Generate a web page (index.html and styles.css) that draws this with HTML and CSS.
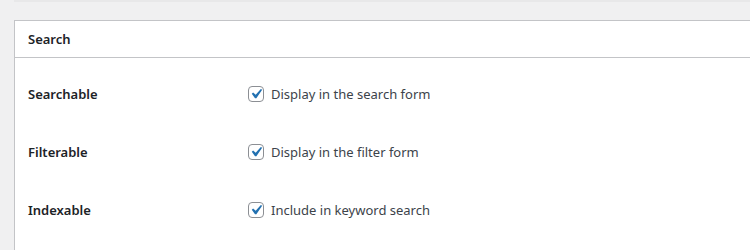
FILE: index.html
```html
<!DOCTYPE html>
<html>
<head>
    <title>Search settings</title>
    <link rel="stylesheet" href="styles.css">
</head>
<body>
    <div class="top-strip"></div>

    <div class="postbox">
        <div class="postbox-header">
            <h2>Search</h2>
        </div>
        <div class="inside">
            <div class="field-row">
                <div class="field-label">Searchable</div>
                <label class="check">
                    <input type="checkbox" checked>
                    <span class="box"><svg viewBox="0 0 20 20"><path d="M14.83 4.89l1.34.94-5.81 8.38H9.02L5.78 9.67l1.34-1.25 2.57 2.4z"/></svg></span>
                    Display in the search form
                </label>
            </div>
            <div class="field-row">
                <div class="field-label">Filterable</div>
                <label class="check">
                    <input type="checkbox" checked>
                    <span class="box"><svg viewBox="0 0 20 20"><path d="M14.83 4.89l1.34.94-5.81 8.38H9.02L5.78 9.67l1.34-1.25 2.57 2.4z"/></svg></span>
                    Display in the filter form
                </label>
            </div>
            <div class="field-row">
                <div class="field-label">Indexable</div>
                <label class="check">
                    <input type="checkbox" checked>
                    <span class="box"><svg viewBox="0 0 20 20"><path d="M14.83 4.89l1.34.94-5.81 8.38H9.02L5.78 9.67l1.34-1.25 2.57 2.4z"/></svg></span>
                    Include in keyword search
                </label>
            </div>
        </div>
    </div>
</body>
</html>
```

FILE: styles.css
```css
body {
    margin: 0;
    background: #f0f0f1;
    font-family: "Noto Sans", "Open Sans", sans-serif;
    font-size: 13px;
    color: #1d2327;
    overflow: hidden;
}

.top-strip {
    margin-left: 14px;
    height: 2px;
    background: #e8e8e9;
}

/* card runs on past the right and bottom edges */
.postbox {
    margin: 18px -20px 0 14px;
    background: #fff;
    border: 1px solid #c3c4c7;
    border-bottom: none;
}

.postbox-header {
    height: 36px;
    display: flex;
    align-items: center;
    padding: 0 13px;
    border-bottom: 1px solid #c3c4c7;
}

.postbox-header h2 {
    margin: 0;
    font-size: 13px;
    font-weight: 600;
}

.inside {
    padding: 7px 13px 11px;
}

.field-row {
    display: flex;
    align-items: center;
    height: 58px;
}

.field-label {
    width: 220px;
    font-weight: 600;
}

.check {
    display: flex;
    align-items: center;
    gap: 7px;
    color: #3c434a;
    cursor: pointer;
}

.check input {
    display: none;
}

.box {
    width: 14px;
    height: 14px;
    border: 1px solid #8c8f94;
    border-radius: 4px;
    display: flex;
    align-items: center;
    justify-content: center;
}

.box svg {
    width: 20px;
    height: 20px;
    fill: #2271b1;
    flex-shrink: 0;
}
```
